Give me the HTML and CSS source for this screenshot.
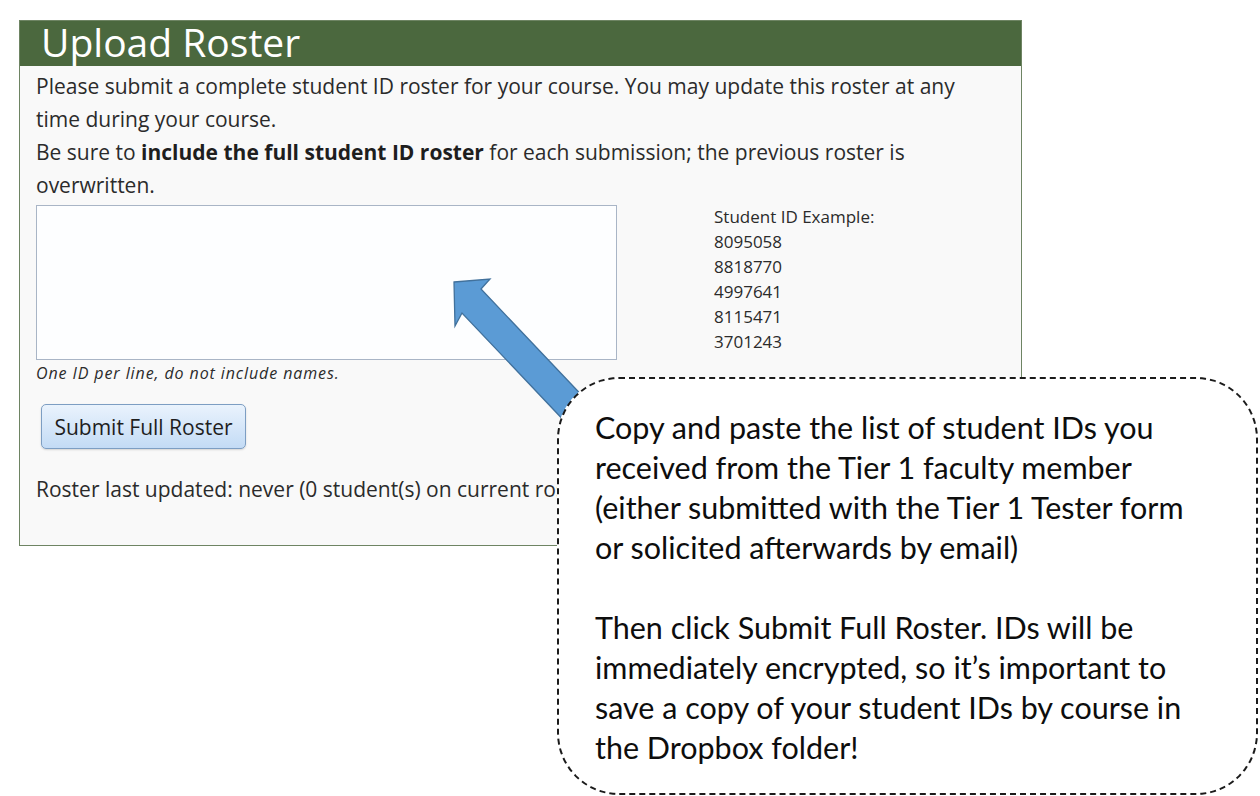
FILE: index.html
```html
<!DOCTYPE html>
<html>
<head>
<meta charset="utf-8">
<link rel="stylesheet" href="styles.css">
</head>
<body>
<div class="page">
  <div class="panel">
    <div class="panel-head">Upload Roster</div>
    <div class="panel-body">
      <p class="intro">Please submit a complete student ID roster for your course. You may update this roster at any time during your course.</p>
      <p class="intro">Be sure to <b>include the full student ID roster</b> for each submission; the previous roster is overwritten.</p>
      <div class="entry-row">
        <div class="entry">
          <textarea class="ids"></textarea>
          <div class="hint">One ID per line, do not include names.</div>
        </div>
        <div class="example">
          <div>Student ID Example:</div>
          <div>8095058</div>
          <div>8818770</div>
          <div>4997641</div>
          <div>8115471</div>
          <div>3701243</div>
        </div>
      </div>
      <button class="submit">Submit Full Roster</button>
      <p class="status">Roster last updated: never (0 student(s) on current roster)</p>
    </div>
  </div>

  <svg class="arrow" width="200" height="200" viewBox="440 270 200 200">
    <polygon points="454,282 490,279 481,289 610,425 588,446 462,313 455,326" fill="#5b9bd5" stroke="#41719c" stroke-width="1.3" stroke-linejoin="miter"/>
  </svg>

  <div class="callout">
    <p>Copy and paste the list of student IDs you received from the Tier 1 faculty member (either submitted with the Tier 1 Tester form or solicited afterwards by email)</p>
    <p>Then click Submit Full Roster. IDs will be immediately encrypted, so it’s important to save a copy of your student IDs by course in the Dropbox folder!</p>
  </div>
</div>
</body>
</html>
```

FILE: styles.css
```css
html, body {
  margin: 0;
  padding: 0;
  background: #ffffff;
}
.page {
  position: relative;
  width: 1260px;
  height: 796px;
  overflow: hidden;
  padding-top: 20px;
  box-sizing: border-box;
}
.panel {
  margin-left: 19px;
  width: 1003px;
  height: 526px;
  box-sizing: border-box;
  border: 1px solid #6e8463;
  background: #f9f9f9;
  font-family: "Open Sans", "DejaVu Sans", sans-serif;
  color: #2b2b2b;
}
.panel-head {
  background: #4b683e;
  color: #ffffff;
  height: 45px;
  line-height: 42px;
  font-size: 39px;
  padding-left: 21px;
}
.panel-body {
  padding: 4px 40px 0 16px;
}
.intro {
  margin: 0;
  font-size: 21px;
  line-height: 33px;
}
.intro b {
  color: #1e1e1e;
}
.entry-row {
  display: flex;
  gap: 97px;
  margin-top: 3px;
}
.entry {
  display: flex;
  flex-direction: column;
}
.ids {
  width: 581px;
  height: 155px;
  box-sizing: border-box;
  border: 1px solid #a9b5c6;
  background: #fdfeff;
  resize: none;
  margin: 0;
  display: block;
}
.hint {
  font-size: 16px;
  font-style: italic;
  letter-spacing: 0.9px;
  line-height: 26px;
}
.example {
  font-size: 17px;
  line-height: 25px;
  margin-top: -1px;
}
.submit {
  display: block;
  margin: 18px 0 0 5px;
  width: 205px;
  height: 45px;
  border: 1px solid #7d9ec3;
  border-radius: 5px;
  background: linear-gradient(#eaf3fd, #c3dbf5);
  font-family: "Open Sans", "DejaVu Sans", sans-serif;
  font-size: 21px;
  color: #1e1e1e;
  box-shadow: 0 1px 2px rgba(0,0,0,0.15);
  padding: 0;
}
.status {
  margin: 24px 0 0 0;
  font-size: 21px;
  line-height: 33px;
}
.arrow {
  position: absolute;
  left: 440px;
  top: 270px;
}
.callout {
  position: absolute;
  left: 557px;
  top: 377px;
  width: 701px;
  height: 418px;
  box-sizing: border-box;
  border: 2px dashed #1a1a1a;
  border-radius: 62px;
  background: #ffffff;
  padding: 28px 55px 0 36px;
  font-family: Lato, "Liberation Sans", sans-serif;
  font-size: 30.5px;
  line-height: 40px;
  color: #0d0d0d;
}
.callout p {
  margin: 0 0 40px 0;
}
```
